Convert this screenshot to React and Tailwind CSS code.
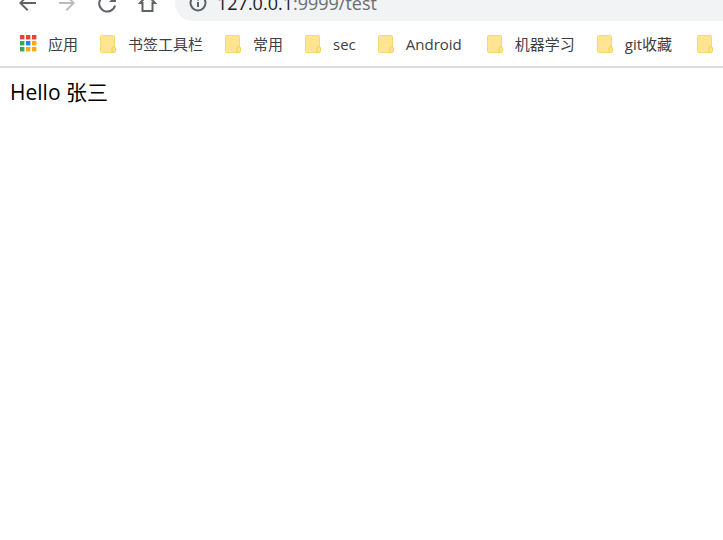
import React from "react";

const bookmarks = [
  { name: "书签工具栏" },
  { name: "常用" },
  { name: "sec" },
  { name: "Android", width: "w-[87px]" },
  { name: "机器学习" },
  { name: "git收藏", width: "w-[78px]" },
];

const appDots = [
  [0, 0, "#ea4335"], [6, 0, "#ea4335"], [12, 0, "#ea4335"],
  [0, 6, "#34a853"], [6, 6, "#1a86f0"], [12, 6, "#fbab05"],
  [0, 12, "#34a853"], [6, 12, "#fbab05"], [12, 12, "#fbab05"],
];

function FolderIcon() {
  return (
    <svg width="17" height="18" viewBox="0 0 17 18" className="shrink-0" aria-hidden="true">
      <rect x="0.5" y="0.5" width="14" height="17" rx="1" fill="#ffe591" stroke="#f8d775" />
      <path d="M12 17.5v-4.2c0-1 .6-1.8 1.6-1.8s1.9.8 1.9 1.8v2.4c0 1-.8 1.8-1.8 1.8z" fill="#ffe591" stroke="#f3cd4b" />
    </svg>
  );
}

function ToolButton({ label, children, className }) {
  return (
    <button type="button" aria-label={label} className={`flex h-9 w-10 shrink-0 items-center justify-center ${className}`}>
      <svg width="24" height="24" viewBox="0 0 24 24" fill="currentColor" aria-hidden="true">
        {children}
      </svg>
    </button>
  );
}

export default function App() {
  return (
    <div className="min-h-screen overflow-hidden bg-white font-['Open_Sans','Noto_Sans_CJK_SC',sans-serif]">
      <header className="border-b-2 border-[#dadce0]">
        <div className="flex h-[21px] items-end overflow-hidden pl-[7px]">
          <ToolButton label="返回" className="text-[#5f6368]">
            <path d="M21 11H7.6l5.8-5.6L12 4l-8 8 8 8 1.4-1.4L7.6 13H21z" />
          </ToolButton>
          <ToolButton label="前进" className="text-[#babcbe]">
            <path d="M4 11h12.4l-5.8-5.6L12 4l8 8-8 8-1.4-1.4L16.4 13H4z" />
          </ToolButton>
          <ToolButton label="重新加载" className="text-[#5f6368]">
            <path d="M20 14.5A8 8 0 1 1 18 7" fill="none" stroke="currentColor" strokeWidth="2" />
            <path d="M21 4v7h-7z" />
          </ToolButton>
          <ToolButton label="主页" className="text-[#5f6368]">
            <path d="M12.5 4 5 12h2.500v8h10v-8H20z" fill="none" stroke="currentColor" strokeWidth="2" />
          </ToolButton>
          <div className="ml-2 flex h-9 flex-1 items-center rounded-l-full bg-[#f1f3f4] pl-[13px]">
            <svg width="20" height="20" viewBox="0 0 20 20" fill="none" stroke="#5f6368" strokeWidth="2" aria-hidden="true">
              <circle cx="10" cy="10" r="7.5" />
              <path d="M10 9v5M10 5.5v2" />
            </svg>
            <div className="pl-[9px] text-[18px] leading-6 text-[#6a6e73]">
              <span className="text-[#202124]">127.0.0.1</span>:9999/test
            </div>
          </div>
        </div>
        <nav className="flex h-[45px] items-center gap-[22px] overflow-hidden pl-5 text-[15px] leading-6 whitespace-nowrap text-[#3c4043]">
          <a href="#apps" className="flex shrink-0 items-center gap-[11px]">
            <svg width="17" height="17" viewBox="0 0 17 17" aria-hidden="true">
              {appDots.map(([x, y, fill]) => (
                <rect key={`${x}-${y}`} x={x} y={y} width="4.4" height="4.4" fill={fill} />
              ))}
            </svg>
            <span>应用</span>
          </a>
          {bookmarks.map(({ name, width = "" }) => (
            <a key={name} href="#bookmark" className={`flex shrink-0 items-center gap-[11px] ${width}`}>
              <FolderIcon />
              <span>{name}</span>
            </a>
          ))}
          <a href="#more" aria-label="更多书签" className="shrink-0">
            <FolderIcon />
          </a>
        </nav>
      </header>
      <main className="px-2.5 py-2 text-[21px] leading-8 text-black">Hello 张三</main>
    </div>
  );
}
